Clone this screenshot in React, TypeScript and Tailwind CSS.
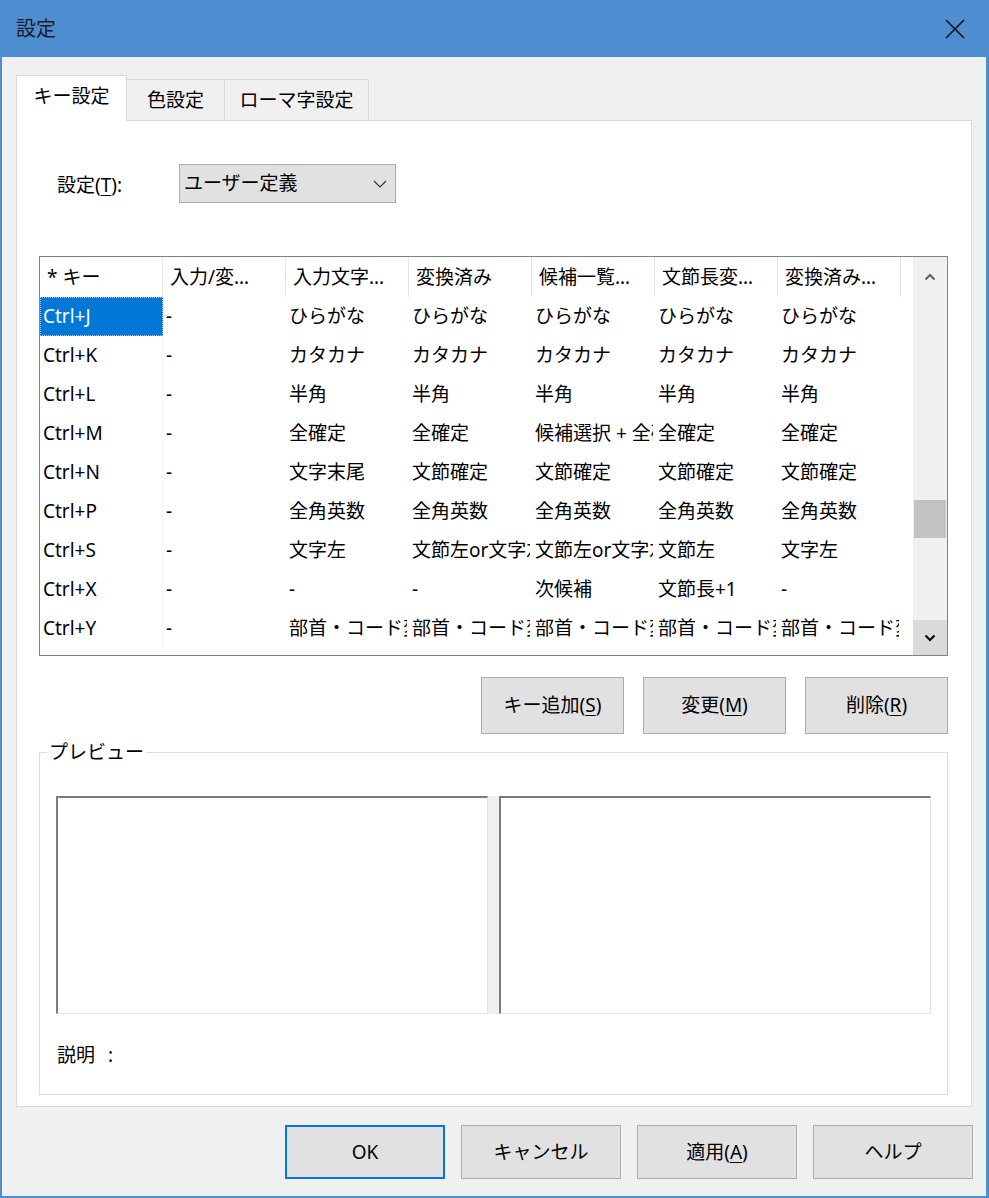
import React from "react";

const FONT = "font-['Noto_Sans','Noto_Sans_CJK_JP',sans-serif]";

const headers = ["* キー", "入力/変…", "入力文字…", "変換済み", "候補一覧…", "文節長変…", "変換済み…"];

const rows: string[][] = [
  ["Ctrl+J", "-", "ひらがな", "ひらがな", "ひらがな", "ひらがな", "ひらがな"],
  ["Ctrl+K", "-", "カタカナ", "カタカナ", "カタカナ", "カタカナ", "カタカナ"],
  ["Ctrl+L", "-", "半角", "半角", "半角", "半角", "半角"],
  ["Ctrl+M", "-", "全確定", "全確定", "候補選択 + 全確定", "全確定", "全確定"],
  ["Ctrl+N", "-", "文字末尾", "文節確定", "文節確定", "文節確定", "文節確定"],
  ["Ctrl+P", "-", "全角英数", "全角英数", "全角英数", "全角英数", "全角英数"],
  ["Ctrl+S", "-", "文字左", "文節左or文字左", "文節左or文字左", "文節左", "文字左"],
  ["Ctrl+X", "-", "-", "-", "次候補", "文節長+1", "-"],
  ["Ctrl+Y", "-", "部首・コード変換", "部首・コード変換", "部首・コード変換", "部首・コード変換", "部首・コード変換"],
];

function Mnemonic({ before, letter, after = ")" }: { before: string; letter: string; after?: string }) {
  return (
    <span>
      {before}
      <span className="underline underline-offset-[3px]">{letter}</span>
      {after}
    </span>
  );
}

function Button({ children, width, height, primary }: { children: React.ReactNode; width: string; height: string; primary?: boolean }) {
  return (
    <button
      className={
        "flex items-center justify-center bg-[#e1e1e1] text-[19px] text-black " +
        width +
        " " +
        height +
        (primary ? " border-2 border-[#0078d7]" : " border border-[#adadad]")
      }
    >
      {children}
    </button>
  );
}

function Chevron({ up, color }: { up?: boolean; color: string }) {
  return (
    <svg width="12" height="8" viewBox="0 0 12 8">
      <path d={up ? "M1.5 6.5 L6 2 L10.5 6.5" : "M1.5 1.5 L6 6 L10.5 1.5"} fill="none" stroke={color} strokeWidth="2" />
    </svg>
  );
}

function KeyTable() {
  return (
    <div className="mt-[53px] flex h-[400px] border border-[#828282] bg-white">
      <div className="flex-1 overflow-hidden">
        <div className="flex h-[40px]">
          {headers.map((h) => (
            <div
              key={h}
              className="flex w-[123px] shrink-0 items-center border-r border-[#e5e5e5] pl-[7px] whitespace-nowrap"
            >
              {h}
            </div>
          ))}
        </div>
        {rows.map((row, r) => (
          <div key={row[0]} className="flex h-[39px]">
            {row.map((cell, c) => {
              const selected = r === 0 && c === 0;
              return (
                <div
                  key={c}
                  className={
                    "flex w-[123px] shrink-0 items-center pl-[3px] pr-[2px] " +
                    (selected
                      ? "bg-[#0078d7] text-white outline-1 outline-dotted -outline-offset-1 outline-[#9dc4ea]"
                      : c === 0
                        ? "border-r border-[#f4f4f4]"
                        : "")
                  }
                >
                  <div className="overflow-hidden whitespace-nowrap">{cell}</div>
                </div>
              );
            })}
          </div>
        ))}
      </div>
      <div className="flex w-[34px] flex-col bg-[#f0f0f0]">
        <div className="flex h-[40px] items-center justify-center">
          <Chevron up color="#606060" />
        </div>
        <div className="flex-1 pt-[203px]">
          <div className="mx-[1px] h-[38px] bg-[#c2c2c2]" />
        </div>
        <div className="flex h-[35px] items-center justify-center bg-[#dadada]">
          <Chevron color="#000000" />
        </div>
      </div>
    </div>
  );
}

function PreviewBox() {
  return (
    <div className="h-[218px] flex-1 border-t-2 border-l-2 border-r border-b border-t-[#7c7c7c] border-l-[#7c7c7c] border-r-[#e3e3e3] border-b-[#e3e3e3] bg-white" />
  );
}

export default function App() {
  return (
    <div className={"flex h-[1198px] w-[989px] flex-col bg-[#4d8ed0] text-black " + FONT}>
      {/* title bar */}
      <div className="flex h-[57px] items-center justify-between pl-[16px] pr-[24px]">
        <span className="text-[20px] text-[#1a1a28]">設定</span>
        <svg width="20" height="20" viewBox="0 0 20 20">
          <path d="M1 1 L19 19 M19 1 L1 19" stroke="#111" strokeWidth="1.6" />
        </svg>
      </div>

      <div className="mb-[2px] ml-[2px] mr-[3px] flex flex-1 flex-col bg-[#f0f0f0] px-[14px] pt-[18px] text-[19px]">
        {/* tabs */}
        <div className="flex h-[45px] items-end">
          <div className="relative z-10 -mb-px flex h-[46px] w-[111px] items-center justify-center border border-b-0 border-[#d9d9d9] bg-white pb-[4px]">
            キー設定
          </div>
          <div className="flex h-[41px] w-[98px] items-center justify-center border border-b-0 border-l-0 border-[#d9d9d9] bg-[#f0f0f0]">
            色設定
          </div>
          <div className="flex h-[41px] w-[144px] items-center justify-center border border-b-0 border-l-0 border-[#d9d9d9] bg-[#f0f0f0]">
            ローマ字設定
          </div>
        </div>

        {/* panel */}
        <div className="flex h-[987px] flex-col border border-[#d9d9d9] bg-white pl-[22px] pr-[23px] pt-[43px]">
          <div className="flex items-center">
            <div className="ml-[18px] w-[122px] pt-[3px]">
              <Mnemonic before="設定(" letter="T" after="):" />
            </div>
            <div className="flex h-[39px] w-[217px] items-center justify-between border border-[#adadad] bg-[#e1e1e1] pl-[4px] pr-[8px]">
              <span>ユーザー定義</span>
              <svg width="14" height="8" viewBox="0 0 14 8">
                <path d="M1 1 L7 7 L13 1" fill="none" stroke="#333" strokeWidth="1.2" />
              </svg>
            </div>
          </div>

          <KeyTable />

          <div className="mt-[21px] flex justify-end gap-[19px]">
            <Button width="w-[143px]" height="h-[57px]">
              <Mnemonic before="キー追加(" letter="S" />
            </Button>
            <Button width="w-[143px]" height="h-[57px]">
              <Mnemonic before="変更(" letter="M" />
            </Button>
            <Button width="w-[143px]" height="h-[57px]">
              <Mnemonic before="削除(" letter="R" />
            </Button>
          </div>

          {/* preview group */}
          <div className="relative mt-[18px] h-[343px] border border-[#dcdcdc] px-[16px] pt-[43px]">
            <span className="absolute -top-[13px] left-[7px] bg-white px-[2px] leading-[24px]">プレビュー</span>
            <div className="flex">
              <PreviewBox />
              <div className="h-[218px] w-[11px] bg-[#f0f0f0]" />
              <PreviewBox />
            </div>
            <div className="mt-[29px] pl-[1px] leading-[24px]">
              説明 <span className="ml-[8px]">:</span>
            </div>
          </div>
        </div>

        {/* dialog buttons */}
        <div className="mr-[-1px] mt-[18px] flex justify-end gap-[16px]">
          <Button width="w-[160px]" height="h-[54px]" primary>
            OK
          </Button>
          <Button width="w-[160px]" height="h-[54px]">
            キャンセル
          </Button>
          <Button width="w-[160px]" height="h-[54px]">
            <Mnemonic before="適用(" letter="A" />
          </Button>
          <Button width="w-[160px]" height="h-[54px]">
            ヘルプ
          </Button>
        </div>
      </div>
    </div>
  );
}
